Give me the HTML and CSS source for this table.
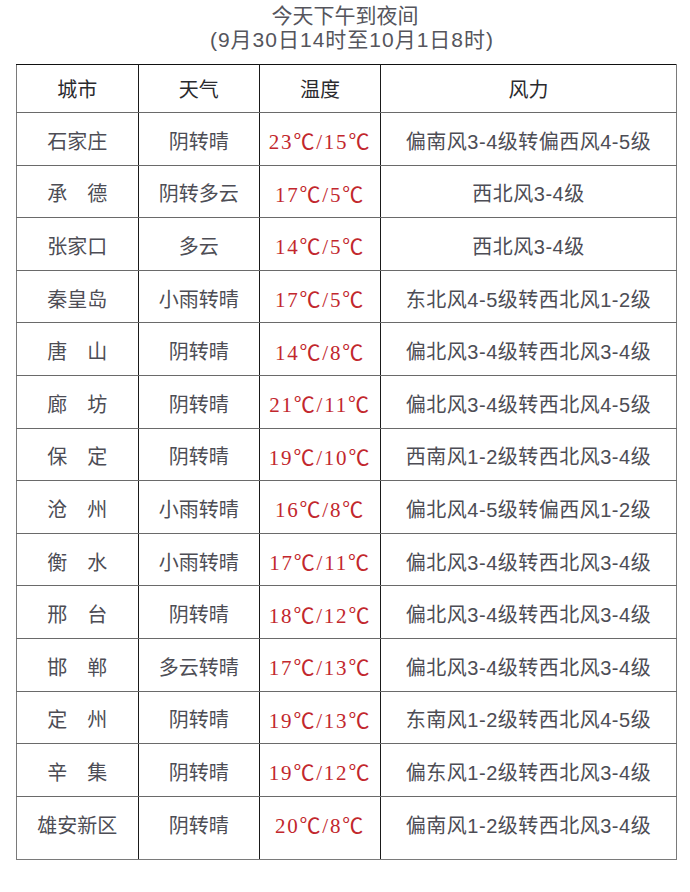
FILE: index.html
```html
<!DOCTYPE html>
<html lang="zh-CN">
<head>
<meta charset="utf-8">
<title>今天下午到夜间</title>
<link rel="stylesheet" href="styles.css">
</head>
<body>
<div class="page">
  <div class="title">
    <div class="title-line">今天下午到夜间</div>
    <div class="title-line sub">(9月30日14时至10月1日8时)</div>
  </div>
  <table class="weather">
    <colgroup>
      <col class="c-city"><col class="c-sky"><col class="c-temp"><col class="c-wind">
    </colgroup>
    <thead>
      <tr class="head"><th>城市</th><th>天气</th><th>温度</th><th>风力</th></tr>
    </thead>
    <tbody>
      <tr><td class="city">石家庄</td><td class="sky">阴转晴</td><td class="temp">23℃/15℃</td><td class="wind">偏南风3-4级转偏西风4-5级</td></tr>
      <tr><td class="city">承　德</td><td class="sky">阴转多云</td><td class="temp">17℃/5℃</td><td class="wind">西北风3-4级</td></tr>
      <tr><td class="city">张家口</td><td class="sky">多云</td><td class="temp">14℃/5℃</td><td class="wind">西北风3-4级</td></tr>
      <tr><td class="city">秦皇岛</td><td class="sky">小雨转晴</td><td class="temp">17℃/5℃</td><td class="wind">东北风4-5级转西北风1-2级</td></tr>
      <tr><td class="city">唐　山</td><td class="sky">阴转晴</td><td class="temp">14℃/8℃</td><td class="wind">偏北风3-4级转西北风3-4级</td></tr>
      <tr><td class="city">廊　坊</td><td class="sky">阴转晴</td><td class="temp">21℃/11℃</td><td class="wind">偏北风3-4级转西北风4-5级</td></tr>
      <tr><td class="city">保　定</td><td class="sky">阴转晴</td><td class="temp">19℃/10℃</td><td class="wind">西南风1-2级转西北风3-4级</td></tr>
      <tr><td class="city">沧　州</td><td class="sky">小雨转晴</td><td class="temp">16℃/8℃</td><td class="wind">偏北风4-5级转偏西风1-2级</td></tr>
      <tr><td class="city">衡　水</td><td class="sky">小雨转晴</td><td class="temp">17℃/11℃</td><td class="wind">偏北风3-4级转西北风3-4级</td></tr>
      <tr><td class="city">邢　台</td><td class="sky">阴转晴</td><td class="temp">18℃/12℃</td><td class="wind">偏北风3-4级转西北风3-4级</td></tr>
      <tr><td class="city">邯　郸</td><td class="sky">多云转晴</td><td class="temp">17℃/13℃</td><td class="wind">偏北风3-4级转西北风3-4级</td></tr>
      <tr><td class="city">定　州</td><td class="sky">阴转晴</td><td class="temp">19℃/13℃</td><td class="wind">东南风1-2级转西北风4-5级</td></tr>
      <tr><td class="city">辛　集</td><td class="sky">阴转晴</td><td class="temp">19℃/12℃</td><td class="wind">偏东风1-2级转西北风3-4级</td></tr>
      <tr class="last"><td class="city">雄安新区</td><td class="sky">阴转晴</td><td class="temp">20℃/8℃</td><td class="wind">偏南风1-2级转西北风3-4级</td></tr>
    </tbody>
  </table>
</div>
</body>
</html>
```

FILE: styles.css
```css
html, body {
  margin: 0;
  padding: 0;
  background: #ffffff;
}

.page {
  width: 690px;
  height: 892px;
  padding-top: 4px;
  box-sizing: border-box;
  font-family: "Liberation Serif", "Noto Sans CJK SC", serif;
  color: #4d4d55;
}

.title {
  text-align: center;
  font-size: 21px;
  line-height: 24px;
  color: #55555c;
  font-family: "Liberation Sans", "Noto Sans CJK SC", sans-serif;
}

.title-line.sub {
  letter-spacing: 1px;
  padding-left: 14px;
}

.weather {
  margin: 12px 0 0 16px;
  width: 660px;
  border-collapse: collapse;
  table-layout: fixed;
}

.c-city { width: 121.5px; }
.c-sky { width: 121.5px; }
.c-temp { width: 121px; }
.c-wind { width: 296px; }

.weather th,
.weather td {
  padding: 3px 0 0 0;
  text-align: center;
  vertical-align: middle;
  border-left: 1.5px solid #1a1a1a;
  border-right: 1.5px solid #1a1a1a;
  border-top: 1px solid #6a6a6a;
  border-bottom: 1px solid #6a6a6a;
  font-weight: 400;
  white-space: nowrap;
}

.weather th:first-child,
.weather td:first-child {
  border-left: 1.5px solid #7a7a7a;
}

.weather th:last-child,
.weather td:last-child {
  border-right: 1.5px solid #7a7a7a;
}

.weather tr.head th {
  border-top: 1.5px solid #111111;
  padding-top: 0;
  height: 47px;
  font-size: 20px;
  color: #2a2a2e;
  font-family: "Noto Sans CJK SC", sans-serif;
}

.weather tbody tr {
  height: 52.6px;
}

.weather tbody tr.last {
  height: 63px;
}

.weather tr.last td {
  padding-bottom: 10px;
  border-top: 1.5px solid #1a1a1a;
  border-bottom: 1.5px solid #7a7a7a;
}

.city,
.sky {
  font-family: "Noto Sans CJK SC", sans-serif;
  font-size: 20px;
  color: #4d4d55;
}

.temp {
  font-family: "Liberation Serif", "Noto Sans CJK SC", serif;
  font-size: 21px;
  color: #c2272d;
  letter-spacing: 1.8px;
}

.wind {
  font-family: "Liberation Sans", "Noto Sans CJK SC", sans-serif;
  font-size: 20px;
  color: #4d4d55;
  letter-spacing: 0.5px;
}
```
